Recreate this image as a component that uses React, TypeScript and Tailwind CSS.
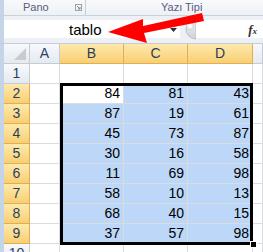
import React from "react";

const data = [
  [84, 81, 43],
  [87, 19, 61],
  [45, 73, 87],
  [30, 16, 58],
  [11, 69, 98],
  [58, 10, 13],
  [68, 40, 15],
  [37, 57, 98],
];

const grid = "border-r border-b border-[#dadcdd]";
const hdrSel =
  "bg-gradient-to-b from-[#fde9ad] to-[#f8cf72] border-r border-b border-[#e3ad55] text-[#2a3f57]";
const hdrNorm =
  "bg-gradient-to-b from-[#f7f9fc] to-[#e5eaf1] border-r border-b border-[#c6ccd6] text-[#2a4364]";

export default function App() {
  return (
    <div
      className="relative w-[263px] h-[252px] overflow-hidden bg-white"
      style={{ fontFamily: '"Liberation Sans", Arial, sans-serif' }}
    >
      {/* Ribbon labels */}
      <div className="flex h-[16px] bg-gradient-to-b from-[#f8f9fb] to-[#eef1f5] border-b border-[#c9d2dd]">
        <div className="w-[4px] bg-[#c4d5ea]" />
        <div className="w-[82px] flex items-center relative border-r border-[#c7ced8]">
          <span className="ml-[19px] text-[11px] text-[#5b5b7e] leading-none">Pano</span>
          <svg className="absolute left-[71px] top-[4px]" width="7" height="7" viewBox="0 0 7 7">
            <rect x="0.5" y="0.5" width="6" height="6" fill="none" stroke="#9aa3ae" />
            <path d="M2 2 L5 5 M5 3 L5 5 L3 5" stroke="#7d8691" fill="none" />
          </svg>
        </div>
        <div className="flex-1 flex items-center">
          <span className="ml-[75px] text-[11px] text-[#5b5b7e] leading-none">Yazı Tipi</span>
        </div>
      </div>

      {/* Formula bar */}
      <div className="flex h-[28px] bg-[#edf0f4] border-b border-[#c5ccd6]">
        <div className="w-[4px] bg-[#c4d5ea]" />
        <div className="flex-1 flex flex-col">
          <div className="h-[4px]" />
          <div className="h-[18px] flex items-center bg-white">
            <div className="w-[176px] h-full relative flex items-center">
              <span className="ml-[65px] text-[15px] text-black leading-none">tablo</span>
              <svg className="absolute left-[166px] top-[8px]" width="7" height="4" viewBox="0 0 7 4">
                <path d="M0 0 L7 0 L3.5 4 Z" fill="#333" />
              </svg>
            </div>
            <div className="w-[16px] h-full bg-[#edf0f4] relative">
              <svg className="absolute left-0 top-[-2px]" width="16" height="22" viewBox="0 0 16 22">
                <defs>
                  <linearGradient id="sp" x1="0" y1="0" x2="0" y2="1">
                    <stop offset="0" stopColor="#eef0f3" />
                    <stop offset="1" stopColor="#cfd4db" />
                  </linearGradient>
                </defs>
                <path d="M16 1 A10 10 0 0 0 16 21 Z" fill="url(#sp)" stroke="#b9c0c9" />
                <circle cx="10" cy="8" r="3.5" fill="#f7f8fa" stroke="#c9ced5" />
              </svg>
            </div>
            <div className="flex-1 h-full flex items-center justify-end pr-[6px]">
              <span
                className="text-[13px] italic font-bold text-[#333] leading-none"
                style={{ fontFamily: '"Liberation Serif", serif' }}
              >
                f<span className="text-[9px]">x</span>
              </span>
            </div>
          </div>
        </div>
      </div>

      {/* Sheet */}
      <div className="flex">
        <div className="w-[4px] bg-[#c4d5ea] h-[208px]" />
        <div className="relative">
          <div className="grid grid-cols-[26px_30px_64px_64px_65px_10px] auto-rows-[20px] text-[14px]">
            {/* header row */}
            <div className={`${hdrNorm} relative`}>
              <svg className="absolute right-[3px] bottom-[3px]" width="12" height="12" viewBox="0 0 12 12">
                <path d="M12 0 L12 12 L0 12 Z" fill="#c8ccd2" />
              </svg>
            </div>
            <div className={`${hdrNorm} flex items-center justify-center`}>A</div>
            <div className={`${hdrSel} flex items-center justify-center`}>B</div>
            <div className={`${hdrSel} flex items-center justify-center`}>C</div>
            <div className={`${hdrSel} flex items-center justify-center`}>D</div>
            <div className={`${hdrNorm}`} />

            {/* row 1 */}
            <div className={`${hdrNorm} flex items-center justify-center`}>1</div>
            <div className={grid} />
            <div className={grid} />
            <div className={grid} />
            <div className={grid} />
            <div className={grid} />

            {data.map((row, i) => (
              <React.Fragment key={i}>
                <div className={`${hdrSel} flex items-center justify-center`}>{i + 2}</div>
                <div className={grid} />
                {row.map((v, j) => (
                  <div
                    key={j}
                    className={`${grid} ${
                      i === 0 && j === 0 ? "bg-white" : "bg-[#bcd7f7]"
                    } flex items-center justify-end pr-[3px] text-black`}
                  >
                    {v}
                  </div>
                ))}
                <div className={grid} />
              </React.Fragment>
            ))}

            {/* row 10 */}
            <div className={`${hdrNorm} flex items-center justify-center`}>10</div>
            <div className={grid} />
            <div className={grid} />
            <div className={grid} />
            <div className={grid} />
            <div className={grid} />
          </div>

          {/* selection border */}
          <div className="absolute left-[56px] top-[39px] w-[193px] h-[162px] border-[3px] border-black pointer-events-none" />
          <div className="absolute left-[246px] top-[197px] w-[7px] h-[7px] bg-black border border-white" />
        </div>
      </div>

      {/* Red arrow */}
      <svg className="absolute left-0 top-0 pointer-events-none" width="263" height="252" viewBox="0 0 263 252">
        <polygon
          points="108,32 143,19 143,26 202,13 204,21 144,33 147,43"
          fill="#ff0000"
        />
      </svg>
    </div>
  );
}
